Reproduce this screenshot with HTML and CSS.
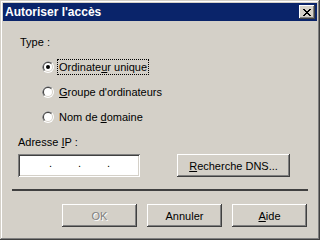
FILE: index.html
```html
<!DOCTYPE html>
<html lang="fr">
<head>
    <meta charset="UTF-8">
    <title>Autoriser l'accès</title>
    <link rel="stylesheet" href="styles.css">
</head>
<body>
    <div class="window">
        <div class="titlebar">
            <span class="title">Autoriser l'accès</span>
            <button class="close">
                <svg width="8" height="7" viewBox="0 0 8 7" shape-rendering="crispEdges">
                    <path d="M0 0h2v1h-2z M6 0h2v1h-2z M1 1h2v1h-2z M5 1h2v1h-2z M2 2h4v1h-4z M3 3h2v1h-2z M2 4h4v1h-4z M1 5h2v1h-2z M5 5h2v1h-2z M0 6h2v1h-2z M6 6h2v1h-2z" fill="#000"/>
                </svg>
            </button>
        </div>

        <div class="content">
            <div class="label type-label">Type :</div>

            <div class="radios">
                <label class="radio">
                    <svg class="radio-glyph" width="12" height="12" viewBox="0 0 12 12">
                        <circle cx="6" cy="6" r="6" fill="#fff"/>
                        <path d="M1.76 10.24 A6 6 0 0 1 10.24 1.76 Z" fill="#808080"/>
                        <circle cx="6" cy="6" r="5" fill="#d4d0c8"/>
                        <path d="M2.46 9.54 A5 5 0 0 1 9.54 2.46 Z" fill="#404040"/>
                        <circle cx="6" cy="6" r="4" fill="#fff"/>
                        <circle cx="6" cy="6" r="2" fill="#000"/>
                    </svg>
                    <span class="radio-text focused">Ordinate<u>u</u>r unique</span>
                </label>
                <label class="radio">
                    <svg class="radio-glyph" width="12" height="12" viewBox="0 0 12 12">
                        <circle cx="6" cy="6" r="6" fill="#fff"/>
                        <path d="M1.76 10.24 A6 6 0 0 1 10.24 1.76 Z" fill="#808080"/>
                        <circle cx="6" cy="6" r="5" fill="#d4d0c8"/>
                        <path d="M2.46 9.54 A5 5 0 0 1 9.54 2.46 Z" fill="#404040"/>
                        <circle cx="6" cy="6" r="4" fill="#fff"/>
                    </svg>
                    <span class="radio-text"><u>G</u>roupe d'ordinateurs</span>
                </label>
                <label class="radio">
                    <svg class="radio-glyph" width="12" height="12" viewBox="0 0 12 12">
                        <circle cx="6" cy="6" r="6" fill="#fff"/>
                        <path d="M1.76 10.24 A6 6 0 0 1 10.24 1.76 Z" fill="#808080"/>
                        <circle cx="6" cy="6" r="5" fill="#d4d0c8"/>
                        <path d="M2.46 9.54 A5 5 0 0 1 9.54 2.46 Z" fill="#404040"/>
                        <circle cx="6" cy="6" r="4" fill="#fff"/>
                    </svg>
                    <span class="radio-text">Nom de <u>d</u>omaine</span>
                </label>
            </div>

            <div class="label ip-label">Adresse <u>I</u>P :</div>

            <div class="ip-row">
                <div class="ip-field">
                    <span class="ip-dot">.</span>
                    <span class="ip-dot">.</span>
                    <span class="ip-dot">.</span>
                </div>
                <button class="btn dns-btn"><u>R</u>echerche DNS...</button>
            </div>

            <div class="separator"></div>

            <div class="actions">
                <button class="btn" disabled>OK</button>
                <button class="btn">Annuler</button>
                <button class="btn"><u>A</u>ide</button>
            </div>
        </div>
    </div>
</body>
</html>
```
FILE: styles.css
```css
body { margin: 0; font-family: "Liberation Sans", Arial, sans-serif; font-size: 11px; color: #000; }
.window { width: 320px; height: 240px; box-sizing: border-box; padding: 3px; background: #d4d0c8; box-shadow: inset -1px -1px #404040, inset 1px 1px #d4d0c8, inset -2px -2px #808080, inset 2px 2px #fff; }

.titlebar { height: 18px; background: #0a246a; display: flex; align-items: center; justify-content: space-between; padding: 0 2px 0 2px; }
.title { color: #fff; font-weight: bold; font-size: 12px; line-height: 18px; }
.close { width: 16px; height: 14px; padding: 0; border: none; background: #d4d0c8; display: flex; align-items: center; justify-content: center; box-shadow: inset -1px -1px #404040, inset 1px 1px #fff, inset -2px -2px #808080; }

.content { display: flex; flex-direction: column; }
.label { line-height: 13px; }
.type-label { margin: 15px 0 0 17px; }
.ip-label { margin: 11px 0 0 15px; }

.radios { margin: 10px 0 0 39px; display: flex; flex-direction: column; gap: 9px; }
.radio { display: flex; align-items: center; height: 16px; }
.radio-glyph { display: block; margin-right: 3px; }
.radio-text { line-height: 14px; padding: 0 1px 0 1px; border: 1px solid transparent; }
.radio-text.focused { border: 1px dotted #000; }

.ip-row { margin: 5px 0 0 15px; display: flex; align-items: flex-start; }
.ip-field { width: 122px; height: 23px; box-sizing: border-box; background: #fff; display: flex; gap: 26px; padding-left: 31px; box-shadow: inset 1px 1px #808080, inset -1px -1px #fff, inset 2px 2px #404040, inset -2px -2px #d4d0c8; }
.ip-dot { width: 3px; line-height: 19px; text-align: center; }

.btn { width: 75px; height: 23px; padding: 0; border: none; background: #d4d0c8; font-family: inherit; font-size: 11px; color: #000; box-shadow: inset -1px -1px #404040, inset 1px 1px #fff, inset -2px -2px #808080; }
.btn:disabled { color: #808080; text-shadow: 1px 1px #fff; }
.dns-btn { width: 113px; margin-left: 37px; }

.separator { margin: 12px 0 0 9px; width: 296px; height: 2px; background: #404040; }

.actions { margin: 13px 0 0 0; display: flex; justify-content: flex-end; gap: 10px; padding-right: 10px; }
```
